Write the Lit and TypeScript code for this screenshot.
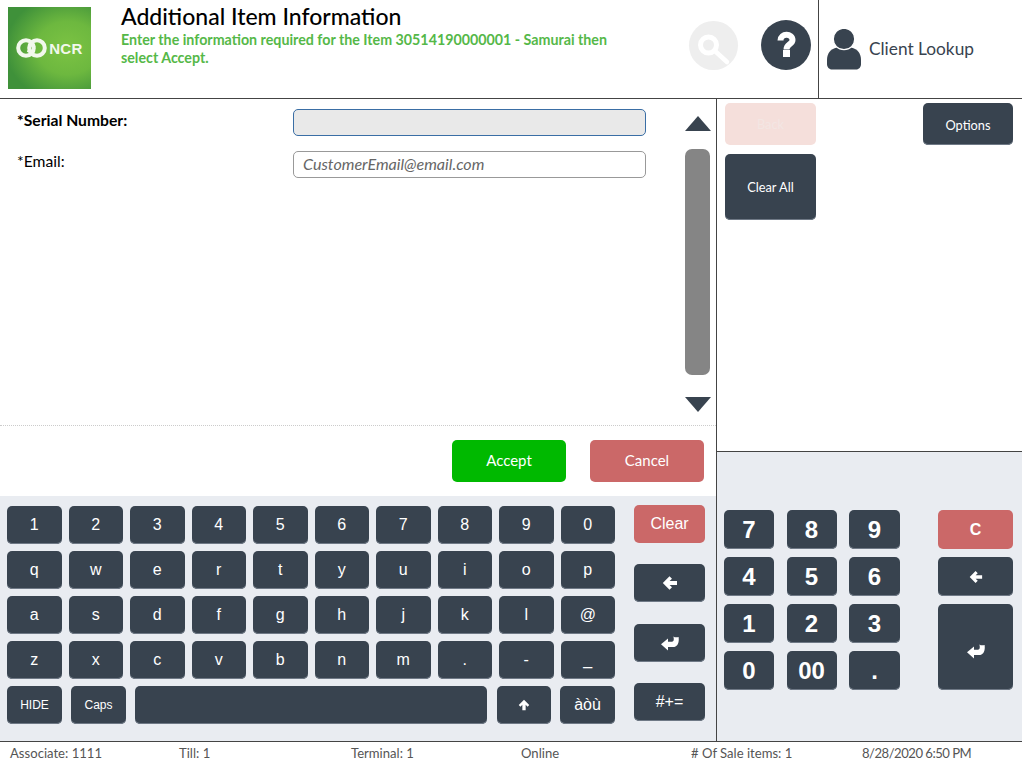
import { LitElement, html, css } from "lit";
import { customElement } from "lit/decorators.js";

const backIcon = (w: number) => html`<svg width=${w} height=${w} viewBox="0 0 16 16" class="ico"><path fill="#fff" d="M7.5 1.2 L10 3.7 L7.6 6 H15 V10 H7.6 L10 12.3 L7.5 14.8 L0.8 8 Z"/></svg>`;
const enterIcon = (w: number, cls = "") => html`<svg width=${w} height=${w * 15 / 18} viewBox="0 0 18 15" class="ico ${cls}"><path fill="#fff" d="M12.4 0.4 C13.8 1.4 15.4 1.6 17.6 1 C18.4 6.5 16.6 11 12 11 H7 V14.4 L0 8.2 L7 2.4 V5.8 H10.8 C12.8 5.8 13.2 3.6 12.4 0.4 Z"/></svg>`;
const upIcon = html`<svg width="12" height="12" viewBox="0 0 16 16" class="ico"><path fill="#fff" d="M8 1 L15 8 L12.8 10.2 L10.2 7.8 V15 H5.8 V7.8 L3.2 10.2 L1 8 Z"/></svg>`;

const row1 = ["1","2","3","4","5","6","7","8","9","0"];
const row2 = ["q","w","e","r","t","y","u","i","o","p"];
const row3 = ["a","s","d","f","g","h","j","k","l","@"];
const row4 = ["z","x","c","v","b","n","m",".","-","_"];

@customElement("app-root")
export class AppRoot extends LitElement {
  static styles = css`
    :host { display: block; width: 1022px; height: 765px; overflow: hidden; background: #fff; font-family: "Lato", "Noto Sans", sans-serif; color: #000; }
    * { box-sizing: border-box; }
    .ico { display: block; }
    .ico.low { margin-top: 8px; }
    .header { height: 99px; display: flex; border-bottom: 1px solid #444; }
    .logo { width: 83px; height: 82px; margin: 7px 0 0 8px; flex: none; background: radial-gradient(ellipse 75% 65% at 72% 50%, #7cc343 0%, #6db83f 50%, #3f913a 100%); display: flex; align-items: center; justify-content: center; gap: 2px; color: #f2f8ec; }
    .logo span { font: bold 15px "Liberation Sans", sans-serif; letter-spacing: 0.4px; }
    .titles { margin-left: 30px; width: 500px; flex: none; padding-top: 2px; }
    .title { font-size: 23px; line-height: 28px; font-weight: 500; color: #000; }
    .sub { font-size: 14.25px; line-height: 18px; font-weight: 700; color: #55b848; margin-top: 1px; }
    .hicons { display: flex; align-items: flex-start; gap: 23px; margin-left: 68px; padding-top: 20px; flex: none; }
    .circle { width: 50px; height: 50px; border-radius: 50%; }
    .circle.s { width: 49px; height: 49px; margin-top: 1px; background: #eee; }
    .circle.q { background: #38434f; }
    .client { margin-left: 7px; border-left: 1px solid #444; flex: 1; display: flex; align-items: center; padding-left: 8px; gap: 8px; font-size: 17.3px; color: #38434f; }
    .client span { padding-bottom: 2px; }
    .main { display: flex; height: 642px; }
    .left { width: 717px; flex: none; border-right: 1px solid #444; display: flex; flex-direction: column; }
    .form { height: 327px; display: flex; border-bottom: 1px dotted #ccc; }
    .fields { width: 668px; flex: none; padding: 10px 0 0 17px; display: flex; flex-direction: column; gap: 15px; }
    .field { display: flex; }
    .lbl { width: 276px; flex: none; font-size: 15.7px; line-height: 21px; }
    .lbl.b { font-weight: 700; padding-top: 1px; }
    .input { width: 353px; height: 27px; border-radius: 5px; border: 1px solid #999; font-size: 16.1px; font-style: italic; color: #666; padding: 0 9px; line-height: 23px; background: #fff; }
    .input.ro { background: #e9e9e9; border-color: #3a6ea5; }
    .scroll { width: 25px; margin-left: 17px; display: flex; flex-direction: column; align-items: center; padding-top: 17px; }
    .tri-up { width: 0; height: 0; border-left: 13px solid transparent; border-right: 13px solid transparent; border-bottom: 15px solid #38434f; }
    .tri-down { width: 0; height: 0; border-left: 13px solid transparent; border-right: 13px solid transparent; border-top: 15px solid #38434f; margin-top: 22px; }
    .thumb { width: 25px; height: 226px; background: #858585; border-radius: 7px; margin-top: 18px; }
    .actions { height: 70px; display: flex; justify-content: flex-end; gap: 24px; padding: 14px 12px 0 0; }
    .btn { border: none; border-radius: 5px; color: #fff; font-family: inherit; display: flex; align-items: center; justify-content: center; padding: 0; }
    .act { width: 114px; height: 42px; font-size: 15px; padding-bottom: 2px; }
    .green { background: #00b900; }
    .red { background: #cb6868; }
    .dark { background: #38434f; box-shadow: inset 0 -1px 0 #6f7986; }
    .kbd { flex: 1; background: #e9ecf1; display: flex; padding: 10px 0 0 7px; }
    .keys { width: 608px; flex: none; display: flex; flex-direction: column; gap: 7px; }
    .krow { display: grid; grid-template-columns: repeat(10, 54.5px); gap: 7px; }
    .lastrow { display: flex; }
    .k { height: 38px; font: 16px "Liberation Sans", sans-serif; }
    .k.s12 { font-size: 12px; }
    .lastrow .hide { width: 55px; margin-right: 9px; }
    .lastrow .caps { width: 55px; margin-right: 9px; }
    .lastrow .space { width: 352px; margin-right: 10px; }
    .lastrow .up { width: 54px; margin-right: 9px; }
    .lastrow .acc { width: 55px; font-size: 16px; }
    .side { width: 71px; margin-left: 19px; margin-top: -1px; flex: none; display: flex; flex-direction: column; }
    .side .k { width: 71px; }
    .side .clear { margin-bottom: 21px; font-size: 16px; }
    .side .bk { margin-bottom: 22px; }
    .side .en { margin-bottom: 21px; }
    .right { flex: 1; display: flex; flex-direction: column; }
    .rtop { height: 353px; border-bottom: 1px solid #444; padding: 4px 9px 0 8px; }
    .rrow { display: flex; justify-content: space-between; }
    .rb { width: 91px; height: 42px; font-size: 12.8px; }
    .rb.opt { width: 90px; padding-top: 1px; }
    .back { background: #f5dfdb; color: #f3e6e3; }
    .rb.clearall { height: 66px; margin-top: 9px; }
    .pad { flex: 1; background: #e9ecf1; padding: 58px 9px 0 7px; display: flex; }
    .nums { display: grid; grid-template-columns: 50px 50px 51px; grid-auto-rows: 39px; column-gap: 12.5px; row-gap: 8px; width: 176px; flex: none; }
    .n { font: bold 24px "Liberation Sans", sans-serif; }
    .ctrl { width: 75px; margin-left: 38px; flex: none; display: flex; flex-direction: column; gap: 8px; }
    .ctrl .btn { height: 39px; }
    .ctrl .c { font: bold 16px "Liberation Sans", sans-serif; }
    .ctrl .btn.big { height: 86px; }
    .status { height: 24px; border-top: 1px solid #444; display: flex; font-size: 13.1px; line-height: 22px; color: #555; }
    .status span { flex: none; }
    .status .a { width: 179px; padding-left: 10px; }
    .status .b { width: 172px; }
    .status .c2 { width: 170px; }
    .status .d { width: 170px; }
    .status .e { width: 171px; }
    .status .f { letter-spacing: -0.5px; }
  `;

  render() {
    const kr = (r: string[]) => html`<div class="krow">${r.map(k => html`<button class="btn dark k">${k}</button>`)}</div>`;
    return html`
      <div class="header">
        <div class="logo">
          <svg width="31" height="20" viewBox="0 0 31 20" fill="none" stroke="#f2f8ec">
            <circle cx="10" cy="10" r="7.8" stroke-width="4"/>
            <circle cx="21" cy="10" r="7.8" stroke-width="4"/>
            <path d="M11.5 14 L16 6.5 M14.5 15 L19 7.5" stroke-width="1.6"/>
          </svg>
          <span>NCR</span>
        </div>
        <div class="titles">
          <div class="title">Additional Item Information</div>
          <div class="sub">Enter the information required for the Item 30514190000001 - Samurai then select Accept.</div>
        </div>
        <div class="hicons">
          <div class="circle s"><svg width="49" height="49" viewBox="0 0 49 49" fill="none" stroke="#fff" stroke-width="5"><circle cx="19.5" cy="24" r="8"/><path d="M26 30 L38 41" stroke-width="4.5" stroke-linecap="round"/></svg></div>
          <div class="circle q"><svg width="50" height="50" viewBox="0 0 50 50" fill="none" stroke="#fff" stroke-width="6"><path d="M19.5 20.5 C19.5 13 31.5 13 31.5 20 C31.5 24.5 25.5 24 25.5 29.5"/><rect x="22" y="30" width="7" height="7" fill="#fff" stroke="none"/></svg></div>
        </div>
        <div class="client">
          <svg width="34" height="41" viewBox="0 0 34 41" fill="#38434f"><path d="M10 18.5 C3 20 0 25 0 31 V35 C0 38 2 40.5 5 40.5 H29 C32 40.5 34 38 34 35 V31 C34 25 31 20 24 18.5 Z"/><circle cx="17" cy="10" r="10.7" stroke="#fff" stroke-width="1.2"/></svg>
          <span>Client Lookup</span>
        </div>
      </div>
      <div class="main">
        <div class="left">
          <div class="form">
            <div class="fields">
              <div class="field"><div class="lbl b">*Serial Number:</div><div class="input ro"></div></div>
              <div class="field"><div class="lbl">*Email:</div><div class="input">CustomerEmail@email.com</div></div>
            </div>
            <div class="scroll"><div class="tri-up"></div><div class="thumb"></div><div class="tri-down"></div></div>
          </div>
          <div class="actions">
            <button class="btn act green">Accept</button>
            <button class="btn act red">Cancel</button>
          </div>
          <div class="kbd">
            <div class="keys">
              ${kr(row1)}${kr(row2)}${kr(row3)}${kr(row4)}
              <div class="lastrow">
                <button class="btn dark k s12 hide">HIDE</button>
                <button class="btn dark k s12 caps">Caps</button>
                <button class="btn dark k space"></button>
                <button class="btn dark k up">${upIcon}</button>
                <button class="btn dark k acc">àòù</button>
              </div>
            </div>
            <div class="side">
              <button class="btn red k clear">Clear</button>
              <button class="btn dark k bk">${backIcon(16)}</button>
              <button class="btn dark k en">${enterIcon(18)}</button>
              <button class="btn dark k">#+=</button>
            </div>
          </div>
        </div>
        <div class="right">
          <div class="rtop">
            <div class="rrow">
              <button class="btn rb back">Back</button>
              <button class="btn rb opt dark">Options</button>
            </div>
            <button class="btn rb dark clearall">Clear All</button>
          </div>
          <div class="pad">
            <div class="nums">
              ${["7","8","9","4","5","6","1","2","3","0","00","."].map(n => html`<button class="btn dark n">${n}</button>`)}
            </div>
            <div class="ctrl">
              <button class="btn red c">C</button>
              <button class="btn dark">${backIcon(14)}</button>
              <button class="btn dark big">${enterIcon(18, "low")}</button>
            </div>
          </div>
        </div>
      </div>
      <div class="status">
        <span class="a">Associate: 1111</span>
        <span class="b">Till: 1</span>
        <span class="c2">Terminal: 1</span>
        <span class="d">Online</span>
        <span class="e"># Of Sale items: 1</span>
        <span class="f">8/28/2020 6:50 PM</span>
      </div>
    `;
  }
}
